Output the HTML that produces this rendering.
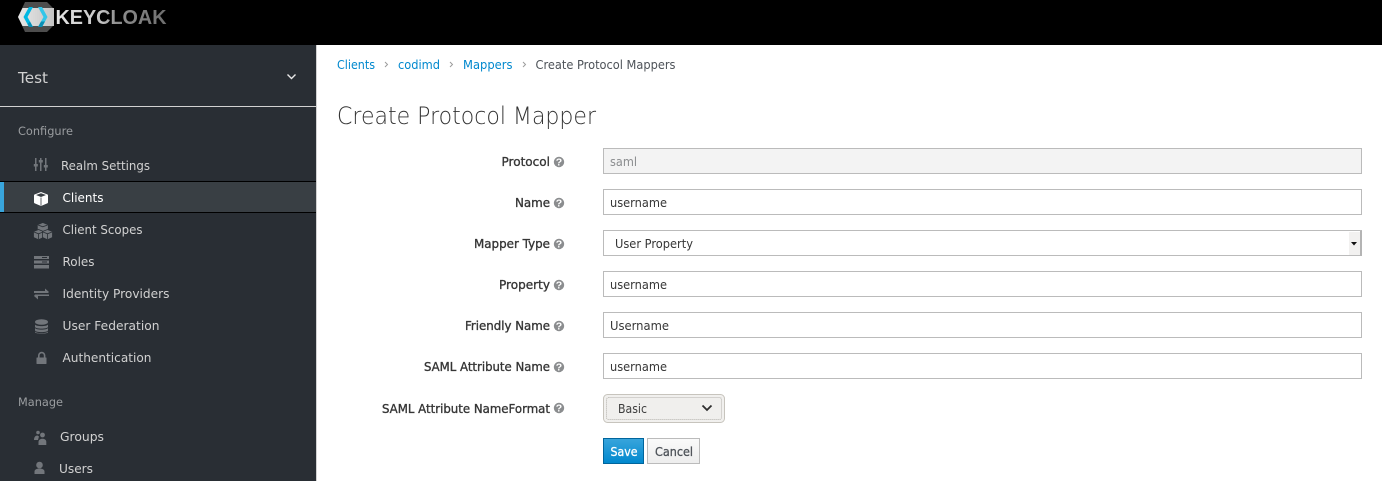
<!DOCTYPE html>
<html><head><meta charset="utf-8"><style>
html,body{margin:0;padding:0;width:1382px;height:481px;overflow:hidden;background:#fff}
svg{display:block}
text{font-family:"DejaVu Sans",sans-serif;font-size:12px;fill:#363636}
.n{fill:#d1d1d1}
.h{fill:#9a9da0;font-size:11.500px}
.b{font-family:"DejaVu Sans",sans-serif;fill:#363636;font-size:12px;stroke:#363636;stroke-width:.35px}
.v{fill:#363636}
.i{fill:#72767b}
.in{fill:#fff;stroke:#bbb;stroke-width:1}
</style></head><body>
<svg width="1382" height="481" viewBox="0 0 1382 481" xmlns="http://www.w3.org/2000/svg">
<defs>
<linearGradient id="kc" gradientUnits="userSpaceOnUse" x1="55" y1="0" x2="166" y2="0"><stop offset="0" stop-color="#e6e6e6"/><stop offset=".42" stop-color="#c4c4c4"/><stop offset=".55" stop-color="#8f8f8f"/><stop offset="1" stop-color="#6e6e6e"/></linearGradient>
<linearGradient id="band" x1="0" y1="0" x2="1" y2="0"><stop offset="0" stop-color="#e8e8e8"/><stop offset="1" stop-color="#c4c4c4"/></linearGradient>
<linearGradient id="sv" x1="0" y1="0" x2="0" y2="1"><stop offset="0" stop-color="#39a5dc"/><stop offset="1" stop-color="#0088ce"/></linearGradient>
<linearGradient id="cn" x1="0" y1="0" x2="0" y2="1"><stop offset="0" stop-color="#fafafa"/><stop offset="1" stop-color="#ededed"/></linearGradient>
<g id="q"><circle cx="5" cy="5" r="5.200" fill="#8b8d8f"/><text x="5" y="8.600" text-anchor="middle" style="font-family:'Liberation Sans',sans-serif;font-size:10.500px;font-weight:bold;fill:#fff">?</text></g>
</defs>

<rect x="0" y="0" width="1382" height="45" fill="#000"/>
<polygon points="25,2 47,2 54,9 54,25 47,32 25,32 18,17" fill="#4d4d4d"/>
<polygon points="18,17 22.500,8 54,8 54,26 22.500,26" fill="url(#band)"/>
<polygon points="29,7 33,7 27.500,17 33,27 29,27 23.500,17" fill="#00b8e3"/>
<polygon points="38,7 42,7 47.500,17 42,27 38,27 43.500,17" fill="#33c6e9"/>
<polygon points="29,27 33,27 30,21.500 27.500,24" fill="#0a8fb5"/>
<polygon points="38,27 42,27 45,21.500 41,21.500" fill="#0a8fb5"/>
<text x="55.500" y="24" textLength="111" lengthAdjust="spacingAndGlyphs" style="font-family:'Liberation Sans',sans-serif;font-size:20px;font-weight:bold;fill:url(#kc)">KEYCLOAK</text>

<rect x="0" y="45" width="316" height="436" fill="#292e34"/>
<rect x="316" y="45" width="1" height="436" fill="#d1d1d1"/>
<text x="18" y="83" textLength="30" class="n" lengthAdjust="spacingAndGlyphs" style="font-size:15px">Test</text>
<path d="M287.500 74.500l4 4 4-4" fill="none" stroke="#e8e8e8" stroke-width="1.400"/>
<rect x="0" y="106" width="316" height="1" fill="#d1d1d1"/>

<text x="18" y="135" textLength="55" class="h" lengthAdjust="spacingAndGlyphs">Configure</text>
<text x="18" y="406" textLength="45" class="h" lengthAdjust="spacingAndGlyphs">Manage</text>

<g class="i">
<rect x="35" y="158" width="1.500" height="13"/><rect x="40" y="158" width="1.500" height="13"/><rect x="45" y="158" width="1.500" height="13"/>
<rect x="33.800" y="164" width="4" height="2.500"/><rect x="38.800" y="160" width="4" height="2.500"/><rect x="43.800" y="165" width="4" height="2.500"/>
</g>
<text x="61" y="170" textLength="89" lengthAdjust="spacingAndGlyphs" class="n">Realm Settings</text>

<rect x="0" y="181" width="316" height="32" fill="#000"/>
<rect x="0" y="182" width="316" height="30" fill="#393f44"/>
<rect x="0" y="182" width="4" height="30" fill="#39a5dc"/>
<path d="M41 192l6.500 2.500q.5.200 .5 1v6.800q0 .7-.5 1l-6.500 2.700-6.500-2.700q-.5-.3-.5-1v-6.800q0-.8 .5-1z" fill="#fff"/>
<path d="M36 195l5 2 5-2-5-1.800z" fill="#393f44"/>
<path d="M41 197.500v8" stroke="#393f44" stroke-width=".8"/>
<text x="62.500" y="202" textLength="41" lengthAdjust="spacingAndGlyphs" style="fill:#fff">Clients</text>

<g fill="#72767b" stroke="#292e34" stroke-width=".8">
<path d="M42.800 222.500l5.500 2.200v5.400l-5.500 2.200-5.500-2.200v-5.400z"/>
<path d="M38.500 229.500l5 2v6l-5 2.200-5-2.200v-6z"/>
<path d="M47.500 229.500l5 2v6l-5 2.200-5-2.200v-6z"/>
</g>
<path d="M34 232l4.500 1.800 4.500-1.800 4.500 1.800 4.500-1.800M38.500 233.800v5.500M47.500 233.800v5.500M38 225l4.800 1.800 4.800-1.800" stroke="#292e34" stroke-width=".8" fill="none"/>
<text x="62.500" y="234" textLength="80" lengthAdjust="spacingAndGlyphs" class="n">Client Scopes</text>

<g fill="#72767b"><rect x="34" y="256" width="15" height="3"/><rect x="34" y="260.500" width="15" height="3"/><rect x="34" y="265" width="15" height="3.500"/></g>
<g fill="#292e34"><rect x="42" y="257" width="5" height="1"/><rect x="42" y="261.500" width="5" height="1"/></g>
<text x="62.500" y="266" textLength="32" lengthAdjust="spacingAndGlyphs" class="n">Roles</text>

<g fill="#72767b"><path d="M34 291h11v-2.500l4 3.500-1 1h-14z"/><path d="M49 295.500h-11v3.500l-4-3.500 1-1.500h14z" transform="translate(0 .5)"/></g>
<text x="62.500" y="298" textLength="107" lengthAdjust="spacingAndGlyphs" class="n">Identity Providers</text>

<g fill="#72767b">
<ellipse cx="41.500" cy="322" rx="6.500" ry="2.800"/>
<path d="M35 324.500c1 2.200 12 2.200 13 0v2.500c-1 2.200-12 2.200-13 0z"/>
<path d="M35 328c1 2.200 12 2.200 13 0v2.500c-1 2.200-12 2.200-13 0z"/>
<path d="M35 331.500c1 2.200 12 2.200 13 0v1c-1 1.500-12 1.500-13 0z"/>
</g>
<text x="62.500" y="330" textLength="97" lengthAdjust="spacingAndGlyphs" class="n">User Federation</text>

<path d="M38 358v-2.500a3.700 3.700 0 0 1 7.400 0v2.500h-1.600v-2.500a2.100 2.100 0 0 0-4.200 0v2.500z" fill="#72767b"/>
<rect x="36.500" y="357.500" width="10" height="6.500" rx=".5" fill="#72767b"/>
<text x="62.500" y="362" textLength="89" lengthAdjust="spacingAndGlyphs" class="n">Authentication</text>

<g fill="#72767b">
<circle cx="38" cy="432.500" r="1.800"/><path d="M34 440c0-3 1.500-4.500 3.500-4.500l1.500 1-1 3.500z"/>
<circle cx="42.500" cy="435" r="2.400"/><path d="M38.500 445v-3c0-2 1.800-3.200 4-3.200s3.800 1.200 3.800 3.200v3z"/>
</g>
<text x="60" y="441" textLength="44" lengthAdjust="spacingAndGlyphs" class="n">Groups</text>

<g fill="#72767b"><circle cx="39.500" cy="465" r="3.300"/><path d="M34.500 474v-2.500c0-1.800 2-3 5-3s5 1.200 5 3v2.500z"/></g>
<text x="59" y="473" textLength="34" lengthAdjust="spacingAndGlyphs" class="n">Users</text>

<text x="337" y="69" textLength="38" lengthAdjust="spacingAndGlyphs" style="fill:#0088ce">Clients</text>
<path d="M385 62l2.500 2.500-2.500 2.500" fill="none" stroke="#9c9c9c"/>
<text x="398" y="69" textLength="42" lengthAdjust="spacingAndGlyphs" style="fill:#0088ce">codimd</text>
<path d="M450 62l2.500 2.500-2.500 2.500" fill="none" stroke="#9c9c9c"/>
<text x="463" y="69" textLength="49.500" lengthAdjust="spacingAndGlyphs" style="fill:#0088ce">Mappers</text>
<path d="M523 62l2.500 2.500-2.500 2.500" fill="none" stroke="#9c9c9c"/>
<text x="535.500" y="69" textLength="140" lengthAdjust="spacingAndGlyphs" style="fill:#4d5258">Create Protocol Mappers</text>

<text x="337" y="124" textLength="259" lengthAdjust="spacingAndGlyphs" style="font-size:24px;font-weight:200;fill:#333">Create Protocol Mapper</text>

<text x="501.500" y="166" textLength="48.500" lengthAdjust="spacingAndGlyphs" class="b">Protocol</text><use href="#q" x="554" y="157"/>
<text x="515" y="207" textLength="35" lengthAdjust="spacingAndGlyphs" class="b">Name</text><use href="#q" x="554" y="198"/>
<text x="474" y="248" textLength="76" lengthAdjust="spacingAndGlyphs" class="b">Mapper Type</text><use href="#q" x="554" y="239"/>
<text x="499" y="289" textLength="51" lengthAdjust="spacingAndGlyphs" class="b">Property</text><use href="#q" x="554" y="280"/>
<text x="465" y="330" textLength="85" lengthAdjust="spacingAndGlyphs" class="b">Friendly Name</text><use href="#q" x="554" y="321"/>
<text x="424" y="371" textLength="126" lengthAdjust="spacingAndGlyphs" class="b">SAML Attribute Name</text><use href="#q" x="554" y="362"/>
<text x="382" y="413" textLength="168" lengthAdjust="spacingAndGlyphs" class="b">SAML Attribute NameFormat</text><use href="#q" x="554" y="403"/>

<rect x="603.500" y="148.500" width="758" height="25" fill="#f3f3f3" stroke="#bbb"/>
<text x="610" y="166" textLength="27" lengthAdjust="spacingAndGlyphs" style="fill:#8b8d8f">saml</text>

<rect x="603.500" y="189.500" width="758" height="25" class="in"/>
<text x="610" y="207" textLength="57" lengthAdjust="spacingAndGlyphs" class="v">username</text>

<rect x="603.500" y="230.500" width="758" height="25" class="in"/>
<text x="615" y="248" textLength="78" lengthAdjust="spacingAndGlyphs" class="v">User Property</text>
<rect x="1349" y="232" width="11" height="23" fill="#f2f1f0"/>
<rect x="1360" y="231" width="2" height="25" fill="#b4b4b4"/>
<path d="M1351 242h6l-3 3.500z" fill="#111"/>

<rect x="603.500" y="271.500" width="758" height="25" class="in"/>
<text x="610" y="289" textLength="57" lengthAdjust="spacingAndGlyphs" class="v">username</text>

<rect x="603.500" y="312.500" width="758" height="25" class="in"/>
<text x="610" y="330" textLength="59" lengthAdjust="spacingAndGlyphs" class="v">Username</text>

<rect x="603.500" y="353.500" width="758" height="25" class="in"/>
<text x="610" y="371" textLength="57" lengthAdjust="spacingAndGlyphs" class="v">username</text>

<rect x="603.500" y="394.500" width="121" height="28" rx="4" fill="#f1f0ee" stroke="#c7c4bd"/>
<rect x="606.500" y="397.500" width="115" height="22" rx="2" fill="#f0efed" stroke="#b5b3ae" stroke-dasharray="1 1"/>
<text x="618" y="413" textLength="29" lengthAdjust="spacingAndGlyphs" style="fill:#3d3d3d">Basic</text>
<path d="M702.500 405.500l4.500 4.500 4.500-4.500" fill="none" stroke="#2e2e2e" stroke-width="1.800"/>

<rect x="603.500" y="438.500" width="40" height="25" fill="url(#sv)" stroke="#00659c"/>
<text x="610.500" y="456" textLength="27" lengthAdjust="spacingAndGlyphs" style="fill:#fff;stroke:#fff;stroke-width:.3px">Save</text>

<rect x="647.500" y="438.500" width="52" height="25" fill="url(#cn)" stroke="#bbb"/>
<text x="655" y="456" textLength="38" lengthAdjust="spacingAndGlyphs" style="fill:#4d5258;stroke:#4d5258;stroke-width:.3px">Cancel</text>
</svg>
</body></html>
